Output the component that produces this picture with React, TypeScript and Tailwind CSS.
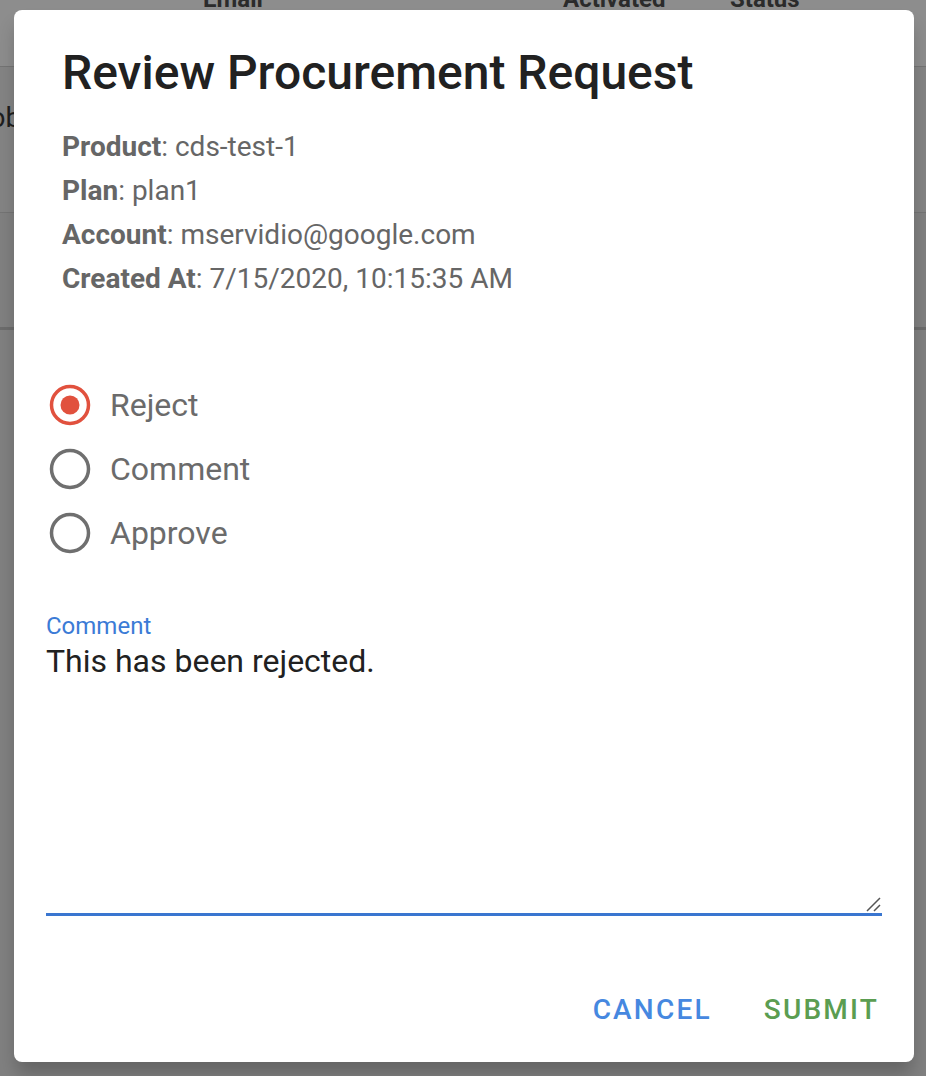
import React from "react"

function Radio({ checked }: { checked?: boolean }) {
  const color = checked ? "#e1513e" : "#6f6f6f"
  return (
    <svg width="42" height="42" viewBox="0 0 42 42" className="shrink-0">
      <circle cx="21" cy="21" r="18.5" fill="none" stroke={color} strokeWidth="3.5" />
      {checked && <circle cx="21" cy="21" r="9.5" fill={color} />}
    </svg>
  )
}

export default function App() {
  const details = [
    { label: "Product", value: "cds-test-1" },
    { label: "Plan", value: "plan1" },
    { label: "Account", value: "mservidio@google.com" },
    { label: "Created At", value: "7/15/2020, 10:15:35 AM" },
  ]
  const options = [
    { label: "Reject", checked: true },
    { label: "Comment", checked: false },
    { label: "Approve", checked: false },
  ]

  return (
    <div className="relative h-[1076px] w-[926px] overflow-hidden bg-[#808080] font-['Roboto',sans-serif]">
      {/* page behind the dialog */}
      <div className="flex flex-col">
        <div className="h-[67px] bg-[#8d8d8d] border-b border-[#747474]">
          <div className="flex -mt-[15px] text-[24px] font-bold leading-[28px] text-[#2b2b2b]">
            <span className="ml-[203px] w-[360px]">Email</span>
            <span className="w-[167px]">Activated</span>
            <span>Status</span>
          </div>
        </div>
        <div className="h-[146px] bg-[#848484] border-b border-[#747474]">
          <div className="-ml-[28px] mt-[30px] text-[28px] text-[#1e1e1e]">Bob</div>
        </div>
        <div className="h-[117px] bg-[#808080] border-b-[3px] border-[#6c6c6c]" />
      </div>

      {/* dialog */}
      <div className="absolute left-[14px] top-[10px] flex h-[1052px] w-[900px] flex-col rounded-[8px] bg-white shadow-[0_14px_18px_-2px_rgba(0,0,0,0.22)]">
        <h1 className="ml-[48px] mt-[35px] text-[48px] font-medium leading-[56px] text-[#212121]">
          Review Procurement Request
        </h1>
        <div className="ml-[48px] mt-[24px] flex flex-col text-[28px] leading-[44px] text-[#666666]">
          {details.map((d) => (
            <div key={d.label}>
              <span className="font-bold">{d.label}</span>: {d.value}
            </div>
          ))}
        </div>
        <div className="ml-[35px] mt-[83px] flex flex-col gap-[22px]">
          {options.map((o) => (
            <label key={o.label} className="flex h-[42px] items-center gap-[19px] text-[32px] leading-[42px] text-[#6b6b6b]">
              <Radio checked={o.checked} />
              {o.label}
            </label>
          ))}
        </div>
        <div className="mx-[32px] mt-[57px] flex flex-col">
          <span className="text-[24px] leading-[30px] text-[#3b7bd6]">Comment</span>
          <div className="relative h-[275px] border-b-[3px] border-[#3a76d0]">
            <div className="pt-[1px] text-[32px] leading-[38px] text-[#212121]">This has been rejected.</div>
            <svg width="16" height="16" viewBox="0 0 16 16" className="absolute bottom-[1px] right-[1px]">
              <path d="M2 15 L15 2 M9 15 L15 9" stroke="#555" strokeWidth="1.5" />
            </svg>
          </div>
        </div>
        <div className="mb-[36px] mr-[35px] mt-auto flex justify-end gap-[52px] text-[28px] font-medium leading-[32px] tracking-[2.2px]">
          <button className="text-[#4688e0]">CANCEL</button>
          <button className="text-[#5b9d51]">SUBMIT</button>
        </div>
      </div>
    </div>
  )
}
